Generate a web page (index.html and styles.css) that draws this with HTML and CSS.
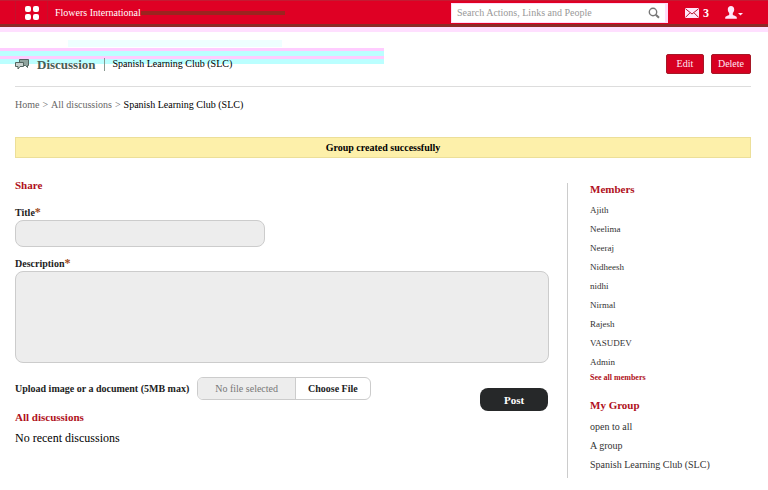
FILE: index.html
```html
<!DOCTYPE html>
<html lang="en">
<head>
<meta charset="utf-8">
<meta name="viewport" content="width=device-width, initial-scale=1">
<title>Spanish Learning Club (SLC)</title>
<link rel="stylesheet" href="styles.css">
</head>
<body>
<header class="topbar">
  <button class="apps" aria-label="Applications">
    <svg width="16" height="16" viewBox="0 0 16 16"><g fill="#fff"><rect x="1" y="1" width="6" height="6" rx="2"/><rect x="9" y="1" width="6" height="6" rx="2"/><rect x="1" y="9" width="6" height="6" rx="2"/><rect x="9" y="9" width="6" height="6" rx="2"/></g></svg>
  </button>
  <a class="brand" href="#">Flowers International</a>
  <form class="search">
    <input type="search" aria-label="Search" placeholder="Search Actions, Links and People">
    <button type="button" aria-label="Search">
      <svg width="12" height="12" viewBox="0 0 12 12" fill="none" stroke="#777"><circle cx="5" cy="5" r="3.7" stroke-width="1.4"/><path d="M7.8 7.8l3.2 3" stroke-width="2"/></svg>
    </button>
  </form>
  <a class="mail" href="#" aria-label="3 messages">
    <svg width="14" height="10" viewBox="0 0 14 10"><rect width="14" height="10" rx="1" fill="#ffe6fa"/><path d="M.5.8L7 6l6.5-5.2M.5 9.300L5 4.800M13.500 9.300L9 4.800" fill="none" stroke="#b5122c"/></svg>
    <span>3</span>
  </a>
  <button class="user" aria-label="Account">
    <svg width="18" height="13" viewBox="0 0 18 13" fill="#ffe6fa"><path d="M6 0c2 0 3.200 1.300 3.200 3.300 0 1.700-.6 2.900-1.400 3.700v1.700c0 .8 4 1 4 3v1H.2v-1c0-2 4-2.200 4-3V7C3.400 6.200 2.800 5 2.800 3.300 2.800 1.300 4 0 6 0z"/><path d="M13 7h5l-2.500 2.500z"/></svg>
  </button>
</header>
<div class="page">
  <div class="heading">
    <svg width="14" height="11" viewBox="0 0 14 11" stroke="#52645f"><path d="M4.500.5h9v6h-1V8.500l-2-2h-6z" fill="#8fa39d"/><path d="M.5 3.500h8v4H5L3 10V7.500H.5z" fill="#c9d2cf"/></svg>
    <h1>Discussion</h1>
    <span class="group-name">Spanish Learning Club (SLC)</span>
    <button class="action">Edit</button>
    <button class="action">Delete</button>
  </div>
  <nav class="crumbs" aria-label="Breadcrumb">
    <a href="#">Home</a><span>&gt;</span><a href="#">All discussions</a><span>&gt;</span><b>Spanish Learning Club (SLC)</b>
  </nav>
  <p class="notice" role="status">Group created successfully</p>
  <div class="columns">
    <main>
      <h2>Share</h2>
      <form class="share">
        <label for="title">Title<em>*</em></label>
        <input class="field title-field" id="title" type="text">
        <label for="description">Description<em>*</em></label>
        <textarea class="field" id="description"></textarea>
        <div class="form-foot">
          <label for="upload">Upload image or a document (5MB max)</label>
          <div class="picker">
            <span class="picker-name">No file selected</span>
            <span class="picker-button">Choose File</span>
            <input id="upload" type="file">
          </div>
          <button class="post" type="button">Post</button>
        </div>
      </form>
      <h2>All discussions</h2>
      <p class="empty">No recent discussions</p>
    </main>
    <aside>
      <h2>Members</h2>
      <ul class="members">
        <li><a href="#">Ajith</a></li>
        <li><a href="#">Neelima</a></li>
        <li><a href="#">Neeraj</a></li>
        <li><a href="#">Nidheesh</a></li>
        <li><a href="#">nidhi</a></li>
        <li><a href="#">Nirmal</a></li>
        <li><a href="#">Rajesh</a></li>
        <li><a href="#">VASUDEV</a></li>
        <li><a href="#">Admin</a></li>
      </ul>
      <a class="see-all" href="#">See all members</a>
      <h2>My Group</h2>
      <ul>
        <li><a href="#">open to all</a></li>
        <li><a href="#">A group</a></li>
        <li><a href="#">Spanish Learning Club (SLC)</a></li>
      </ul>
    </aside>
  </div>
</div>
</body>
</html>
```
FILE: styles.css
```css
* { box-sizing: border-box; }
body, h1, h2, p, ul { margin: 0; padding: 0; }
body {
  font: 10px/16px "Liberation Serif", "Times New Roman", serif;
  color: #222;
  background: #fff;
}
a { color: inherit; text-decoration: none; }
button, input, textarea { font: inherit; }
button { border: 0; padding: 0; background: none; cursor: pointer; }
svg { display: block; }
ul { list-style: none; }

.topbar {
  display: flex;
  align-items: center;
  height: 27px;
  padding: 0 25px 0 15px;
  color: #fff;
  background: #df0024;
  border-top: 1px solid #c41a32;
  border-bottom: 3px solid #8b2a28;
}
.apps {
  display: grid;
  place-items: center;
  align-self: stretch;
  width: 33px;
  border: solid #c5102c;
  border-width: 0 1px;
}
.brand {
  flex: 1;
  display: flex;
  align-items: center;
  margin-left: 7px;
}
.brand::after {
  content: "";
  width: 144px;
  height: 4px;
  background: #9b241f;
}
.search {
  display: flex;
  align-items: center;
  width: 217px;
  height: 20px;
  padding: 0 5px;
  background: #fff;
  border: 2px solid #ffdcf8;
  border-width: 1px 3px 1px 1px;
}
.search input {
  flex: 1;
  min-width: 0;
  padding: 0;
  border: 0;
  outline: 0;
  background: none;
}
.search input::placeholder { color: #999; opacity: 1; }
.mail { display: flex; align-items: center; gap: 4px; margin-left: 17px; font-size: 12px; font-weight: bold; }
.user { margin-left: 16px; }

/* Tinted trim under the bar */
.page {
  padding: 27px 17px 12px 15px;
  background:
    linear-gradient(#ffdfff, #ffdfff) 0 0 / 100% 5px no-repeat,
    linear-gradient(#fff 8px, #eff 8px, #eff 15px, #fff 15px) 68px 5px / 214px 16px no-repeat,
    linear-gradient(#fcf 3px, #bff 3px, #bff 8px, #fcf 8px, #fcf 11px, #bff 11px) 0 21px / 50% 16px no-repeat;
}
.heading {
  display: flex;
  align-items: center;
  height: 33px;
  padding-bottom: 12px;
  border-bottom: 1px solid #ddd;
}
.heading h1 {
  margin-left: 8px;
  padding-right: 8px;
  font-size: 13px;
  line-height: 13px;
  color: #485d55;
  border-right: 1px solid #889890;
}
.group-name { flex: 1; margin-left: 8px; color: #000; }
.action {
  margin-left: 7px;
  padding: 0 6px;
  min-width: 38px;
  height: 20px;
  color: #ffe9f5;
  background: #d70021;
  border: 1px solid #a61827;
  border-radius: 2px;
}
.crumbs { display: flex; gap: 3px; padding-top: 10px; color: #666; }
.crumbs b { font-weight: normal; color: #000; }
.notice {
  margin-top: 24px;
  line-height: 19px;
  font-weight: bold;
  color: #000;
  text-align: center;
  background: #fdf0aa;
  border: 1px solid #ecdf99;
}

.columns { display: flex; gap: 18px; padding-top: 21px; }
main { flex: 1; }
h2 { font-size: 11px; line-height: 12px; color: #b01020; }
.share label { display: block; font-weight: bold; line-height: 14px; }
.share em { color: #a04a20; font-size: 12px; line-height: 12px; font-style: normal; }
.share { padding-top: 15px; }
.field {
  display: block;
  width: 100%;
  padding: 4px 8px;
  background: #ededed;
  border: 1px solid #ccc;
  border-radius: 8px;
}
.title-field { width: 250px; height: 27px; margin-bottom: 10px; }
textarea.field { height: 92px; resize: none; }
.form-foot { display: flex; align-items: flex-start; margin-top: 14px; }
.share .form-foot label { line-height: 23px; }
.picker {
  position: relative;
  display: flex;
  margin-left: 8px;
  height: 23px;
  line-height: 21px;
  border: 1px solid #ccc;
  border-radius: 6px;
  overflow: hidden;
}
.picker-name { padding: 0 17px; color: #777; background: #ededed; border-right: 1px solid #ccc; }
.picker-button { padding: 0 12px; font-weight: bold; }
.picker input { position: absolute; inset: 0; width: 100%; opacity: 0; cursor: pointer; }
.post {
  width: 68px;
  height: 23px;
  margin: 11px 1px 0 auto;
  font-size: 11px;
  font-weight: bold;
  color: #fff;
  background: #262829;
  border-radius: 8px;
}
.empty { margin-top: 7px; font-size: 12px; color: #000; }

aside {
  width: 184px;
  margin-top: 4px;
  padding: 0 0 4px 22px;
  border-left: 1px solid #ccc;
}
aside ul { padding-top: 6px; }
aside li { line-height: 19px; color: #333; }
.members { font-size: 9px; }
.see-all { display: block; font-size: 8px; line-height: 12px; font-weight: bold; color: #b01020; }
.see-all + h2 { margin-top: 15px; }
```
